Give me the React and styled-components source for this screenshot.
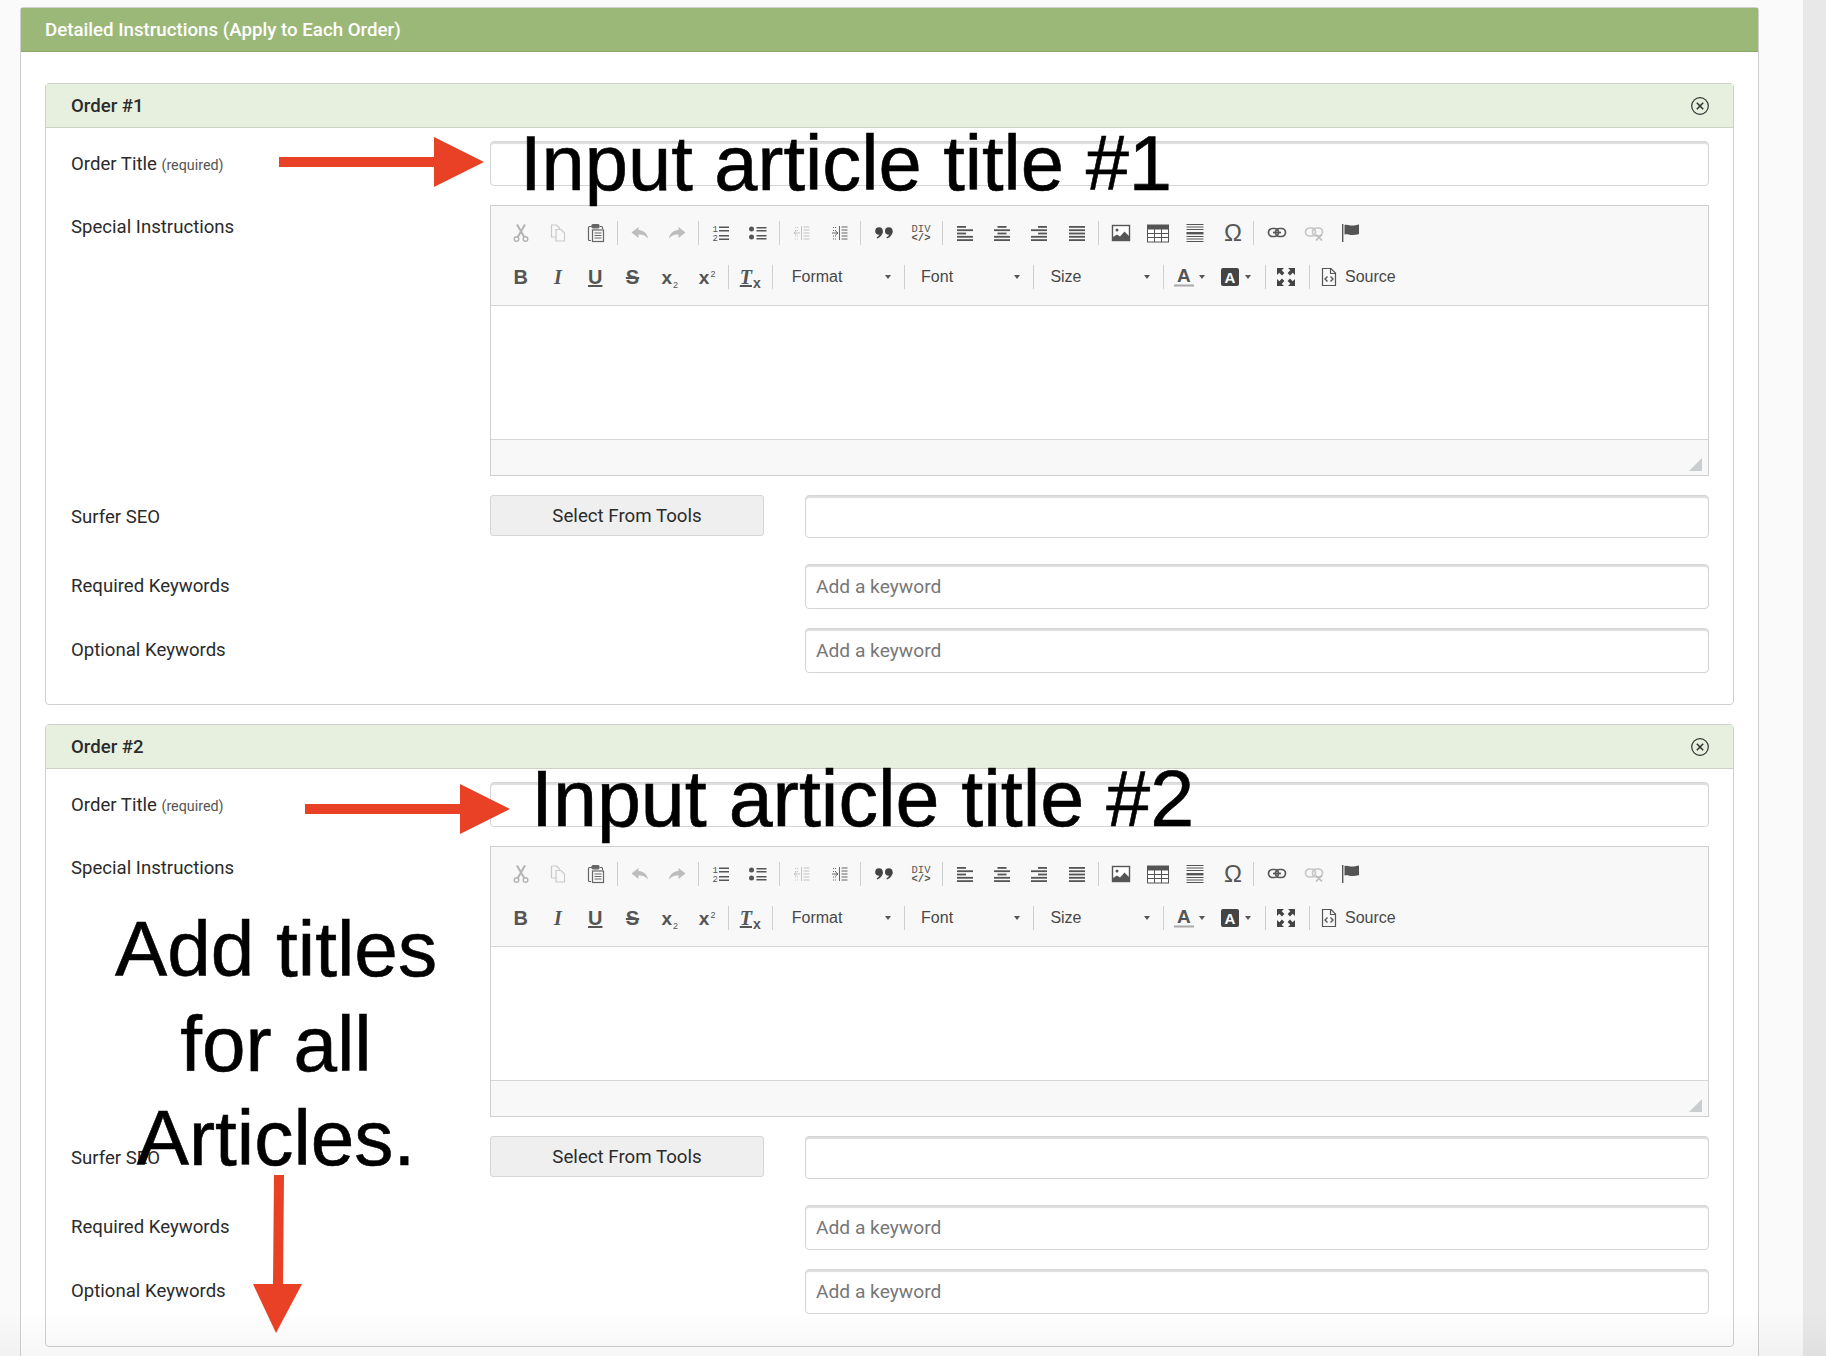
import React from 'react';
import styled, { createGlobalStyle } from 'styled-components';

const GlobalStyle = createGlobalStyle`
  html, body {
    margin: 0;
    padding: 0;
    background: #fafafa;
  }
  body {
    font-family: 'Roboto', sans-serif;
    overflow: hidden;
  }
  * {
    box-sizing: border-box;
  }
`;

const Page = styled.div`
  position: relative;
  display: flex;
  width: 1826px;
  height: 1356px;
  overflow: hidden;
`;

const Main = styled.main`
  flex: 1;
  display: flex;
  padding: 7px 44px 0 20px;
  background: #fafafa;
`;

const ScrollTrack = styled.div`
  width: 23px;
  background: #e8e8e8;
`;

const Panel = styled.section`
  flex: 1;
  background: #fff;
  border: 1px solid #cfcfcf;
  border-bottom: none;
  border-radius: 4px 4px 0 0;
`;

const PanelHeader = styled.h1`
  margin: 0;
  height: 44px;
  padding-left: 24px;
  display: flex;
  align-items: center;
  background: #9cb878;
  border-bottom: 1px solid #8ba669;
  color: #fff;
  font-size: 18.7px;
  font-weight: 500;
`;

const PanelBody = styled.div`
  display: flex;
  flex-direction: column;
  gap: 19px;
  padding: 31px 24px 0;
`;

const Card = styled.article`
  border: 1px solid #cfcfcf;
  border-radius: 4px;
  padding-bottom: ${(p) => p.$bottom}px;
`;

const CardHeader = styled.header`
  height: 44px;
  padding: 0 23px 0 25px;
  display: flex;
  align-items: center;
  justify-content: space-between;
  background: #e7f0df;
  border-bottom: 1px solid #ccd3c6;
  color: #2b2b2b;
  font-size: 18.6px;
  font-weight: 500;
`;

const Row = styled.div`
  display: grid;
  grid-template-columns: 419px 274px 1fr;
  align-items: ${(p) => (p.$start ? 'start' : 'center')};
  margin-top: ${(p) => p.$top}px;
  padding: 0 24px 0 25px;
`;

const Label = styled.label`
  color: #2b2b2b;
  font-size: 18.6px;
  margin-top: ${(p) => p.$nudge || 0}px;
`;

const Hint = styled.small`
  color: #555;
  font-size: 14.3px;
`;

const TextInput = styled.input`
  display: block;
  height: ${(p) => p.$height || 45}px;
  padding: 0 10px;
  grid-column: ${(p) => (p.$wide ? '2 / -1' : '3')};
  margin-left: ${(p) => (p.$wide ? 0 : 41)}px;
  width: ${(p) => (p.$wide ? '100%' : 'calc(100% - 41px)')};
  border: 1px solid #d2d6d9;
  border-radius: 4px;
  box-shadow: inset 0 2px 1px #dedede;
  background: #fff;
  font-family: 'Roboto', sans-serif;
  font-size: 19.2px;
  color: #333;

  &::placeholder {
    color: #777;
    opacity: 1;
  }
`;

const ToolsButton = styled.button`
  grid-column: 2;
  height: 41px;
  margin-bottom: 2px;
  border: 1px solid #d6d6d6;
  border-radius: 3px;
  background: #efefef;
  color: #2b2b2b;
  font-family: 'Roboto', sans-serif;
  font-size: 18.7px;
`;

const Editor = styled.div`
  grid-column: 2 / -1;
  border: 1px solid #cfcfcf;
  background: #f8f8f8;
`;

const Toolbar = styled.div`
  height: 100px;
  padding: 5px 0 0 10px;
  border-bottom: 1px solid #d6d6d6;
`;

const ToolRow = styled.div`
  display: flex;
  align-items: center;
  height: 44px;
  padding-left: ${(p) => p.$inset || 0}px;
`;

const ToolButton = styled.span`
  flex: none;
  width: ${(p) => p.$width || 37.3}px;
  height: 32px;
  display: flex;
  align-items: center;
  justify-content: ${(p) => (p.$pad ? 'flex-start' : 'center')};
  padding-left: ${(p) => p.$pad || 0}px;
`;

const Sep = styled.span`
  flex: none;
  width: 1px;
  height: 24px;
  margin: 0 ${(p) => p.$right ?? 3.5}px 0 ${(p) => p.$left ?? 2.2}px;
  background: #cfcfcf;
`;

const Combo = styled.span`
  flex: none;
  width: 129.3px;
  height: 24px;
  padding: 0 13px 0 16px;
  display: flex;
  align-items: center;
  justify-content: space-between;
  border-right: 1px solid #cfcfcf;
  color: #484848;
  font-family: 'Liberation Sans', Arial, sans-serif;
  font-size: 16px;
`;

const Caret = styled.i`
  width: 0;
  height: 0;
  margin-left: ${(p) => p.$gap || 0}px;
  border-left: 3.5px solid transparent;
  border-right: 3.5px solid transparent;
  border-top: 4px solid #555;
`;

const Glyph = styled.span`
  font-family: ${(p) => (p.$serif ? "'Liberation Serif', serif" : "'Liberation Sans', Arial, sans-serif")};
  font-size: ${(p) => p.$size || 20}px;
  font-weight: 700;
  font-style: ${(p) => (p.$italic ? 'italic' : 'normal')};
  text-decoration: ${(p) => p.$line || 'none'};
  color: #555;
  line-height: 1;
`;

const Tiny = styled.span`
  font-family: 'Liberation Sans', Arial, sans-serif;
  font-size: ${(p) => p.$size || 9}px;
  font-style: normal;
  font-weight: ${(p) => p.$weight || 400};
  text-decoration: none;
  display: inline-block;
  margin-left: 1px;
  vertical-align: ${(p) => (p.$up ? '7px' : '-4px')};
  line-height: 0;
`;

const SourceText = styled.span`
  margin-left: 6px;
  color: #484848;
  font-family: 'Liberation Sans', Arial, sans-serif;
  font-size: 16px;
`;

const EditArea = styled.div`
  height: 133px;
  background: #fff;
`;

const EditFooter = styled.div`
  position: relative;
  height: 36px;
  border-top: 1px solid #d6d6d6;
`;

const Grip = styled.i`
  position: absolute;
  right: 6px;
  bottom: 4px;
  width: 0;
  height: 0;
  border-left: 13px solid transparent;
  border-bottom: 13px solid #c8cdd0;
`;

const Note = styled.div`
  position: absolute;
  left: ${(p) => p.$left}px;
  top: ${(p) => p.$top}px;
  width: ${(p) => (p.$width ? `${p.$width}px` : 'auto')};
  color: #000;
  font-family: 'Liberation Sans', Arial, sans-serif;
  font-size: ${(p) => p.$size}px;
  line-height: ${(p) => p.$lead || 1.15};
  text-align: ${(p) => (p.$width ? 'center' : 'left')};
  white-space: nowrap;
  -webkit-text-stroke: 0.6px #000;
`;

const ArrowArt = styled.svg`
  position: absolute;
  left: 0;
  top: 0;
  pointer-events: none;
`;

const BottomFade = styled.div`
  position: absolute;
  left: 0;
  right: 0;
  bottom: 0;
  height: 46px;
  pointer-events: none;
  background: linear-gradient(to bottom, rgba(0, 0, 0, 0), rgba(0, 0, 0, 0.035));
`;

const Icon = ({ children, size = 20 }) => (
  <svg width={size} height={size} viewBox="0 0 20 20" fill="none" stroke="none" overflow="visible">{children}</svg>
);

const bars = (rows) => rows.map(([x, y, w, h = 1.8], i) => <rect key={i} x={x} y={y} width={w} height={h} fill="#555" />);

const icons = {
  cut: (
    <g stroke="#b4b4b4" strokeWidth="2">
      <circle cx="5.5" cy="16" r="2.3" strokeWidth="1.4" />
      <circle cx="14.5" cy="16" r="2.3" strokeWidth="1.4" />
      <path d="M6.8 14 14 1.5M13.2 14 6 1.5" />
    </g>
  ),
  copy: (
    <g stroke="#cacaca" strokeWidth="1.2">
      <path d="M9 14H3.500V2h5l3 3v1" />
      <path d="M8 6.500h5l3.500 3.500v8H8z" fill="#f8f8f8" />
    </g>
  ),
  paste: (
    <g stroke="#666" strokeWidth="1.2">
      <path d="M5 17.500H3.500a1 1 0 0 1-1-1V4.500a1 1 0 0 1 1-1H6M14 3.500h1.500a1 1 0 0 1 1 1V6" />
      <rect x="6" y="1.600" width="7" height="3.200" rx="1" fill="#666" />
      <rect x="6.500" y="7" width="11" height="11.500" />
      <path d="M8.500 10h7M8.500 12.500h7M8.500 15h7" />
    </g>
  ),
  undo: <path d="M8.500 4 1.500 9.500 8.500 15v-3.500c3.600-.4 6.800.8 9.500 4-.4-4.700-4.500-8.200-9.500-8.400z" fill="#bdbdbd" />,
  redo: <path d="M11.500 4 18.500 9.500 11.500 15v-3.500c-3.600-.4-6.800.8-9.500 4 .4-4.700 4.500-8.200 9.500-8.400z" fill="#bdbdbd" />,
  ol: (
    <g>
      <text x="1.500" y="9" fontFamily="Liberation Mono" fontSize="9" fill="#555">1</text>
      <text x="1.500" y="18" fontFamily="Liberation Mono" fontSize="9" fill="#555">2</text>
      {bars([[8, 3.500, 10, 1.5], [8, 7, 10, 1.5], [8, 12, 10, 1.5], [8, 15.500, 10, 1.5]])}
    </g>
  ),
  ul: (
    <g>
      <circle cx="3.500" cy="6" r="2.500" fill="#555" />
      <circle cx="3.500" cy="14" r="2.500" fill="#555" />
      {bars([[8.500, 4, 10, 1.5], [8.500, 7, 10, 1.5], [8.500, 12, 10, 1.5], [8.500, 15, 10, 1.5]])}
    </g>
  ),
  outdent: (
    <g stroke="#c4c4c4" strokeWidth="1">
      <path d="M9.500 3v14M11.500 4h6M11.500 7h6M11.500 10h6M11.500 13h6M11.500 16h6" />
      <path d="M3 4.500h3M3 7.500h3M3 13h3M3 16h3" strokeDasharray="1 1" />
      <path d="M2 10h6M4.500 8 2 10l2.500 2" />
    </g>
  ),
  indent: (
    <g stroke="#666" strokeWidth="1">
      <path d="M9.500 3v14M11.500 4h6M11.500 7h6M11.500 10h6M11.500 13h6M11.500 16h6" />
      <path d="M3 4.500h3M3 7.500h3M3 13h3M3 16h3" strokeDasharray="1 1" />
      <path d="M2 10h6M5.500 8 8 10l-2.500 2" />
    </g>
  ),
  quote: (
    <g fill="#444">
      <circle cx="5" cy="8" r="3.800" />
      <path d="M8.800 8c0 3.600-2 6.200-5.600 7.500l-.6-1.200c2-1 3-2.400 3.200-4.500z" />
      <circle cx="14.800" cy="8" r="3.800" />
      <path d="M18.600 8c0 3.600-2 6.200-5.600 7.500l-.6-1.200c2-1 3-2.400 3.200-4.500z" />
    </g>
  ),
  div: (
    <g fill="#555" textAnchor="middle">
      <text x="10" y="9" fontFamily="Liberation Mono" fontSize="10.500">DIV</text>
      <text x="10" y="17.500" fontFamily="Liberation Mono" fontSize="10.500" fontWeight="700">&lt;/&gt;</text>
    </g>
  ),
  left: bars([[2, 3, 9], [2, 6.300, 16], [2, 9.600, 9], [2, 12.900, 16], [2, 16.200, 16]]),
  center: bars([[5.500, 3, 9], [2, 6.300, 16], [5.500, 9.600, 9], [2, 12.900, 16], [2, 16.200, 16]]),
  right: bars([[9, 3, 9], [2, 6.300, 16], [9, 9.600, 9], [2, 12.900, 16], [2, 16.200, 16]]),
  justify: bars([[2, 3, 16], [2, 6.300, 16], [2, 9.600, 16], [2, 12.900, 16], [2, 16.200, 16]]),
  image: (
    <g>
      <rect x="1.500" y="2.500" width="17" height="15" stroke="#555" strokeWidth="1.4" fill="#fff" />
      <circle cx="6" cy="7" r="1.500" fill="#555" />
      <path d="M2 17v-3l4-2.500 3 2 4.500-5 5 5V17z" fill="#555" />
    </g>
  ),
  table: (
    <g>
      <rect x="-0.500" y="2" width="21" height="17" fill="#fff" stroke="#555" />
      <rect x="-0.500" y="2" width="21" height="4.500" fill="#555" />
      <path d="M6.500 6v13M13.500 6v13M0 10.500h20M0 14.500h20" stroke="#555" strokeWidth="1" />
    </g>
  ),
  hr: (
    <g>
      {bars([[1.500, 1, 17, 1], [1.500, 3.500, 17, 1], [1.500, 6, 17, 1], [1.500, 9, 17, 2.400], [1.500, 13, 17, 1], [1.500, 15.500, 17, 1], [1.500, 18, 17, 1]])}
    </g>
  ),
  omega: <text x="10" y="18" textAnchor="middle" fontFamily="Liberation Sans" fontSize="24" fill="#555">Ω</text>,
  link: (
    <g stroke="#555" strokeWidth="1.700">
      <rect x="1.500" y="5.500" width="10" height="8" rx="4" />
      <rect x="8.500" y="5.500" width="10" height="8" rx="4" />
      <path d="M6 9.500h8" />
    </g>
  ),
  unlink: (
    <g stroke="#c6c6c6" strokeWidth="1.700">
      <rect x="1.500" y="5" width="10" height="8" rx="4" />
      <rect x="8.500" y="5" width="10" height="8" rx="4" />
      <path d="M12 11.500l6 6M18 11.500l-6 6" stroke="#bdbdbd" />
    </g>
  ),
  flag: (
    <g fill="#555">
      <rect x="1" y="1" width="1.400" height="18" />
      <path d="M3.500 2c3-1 5 .6 7.500.6 2 0 5-.6 7-1V11c-2 .7-5 1-7 1-2.700 0-4.500-1.400-7.500-.4z" />
    </g>
  ),
  maximize: (
    <g fill="#444">
      <path d="M1 1h7L5.700 3.300 8.400 6 6 8.400 3.300 5.700 1 8z" />
      <path d="M19 1v7l-2.300-2.300L14 8.400 11.600 6l2.700-2.700L12 1z" />
      <path d="M1 19v-7l2.300 2.300L6 11.600 8.400 14l-2.700 2.700L8 19z" />
      <path d="M19 19h-7l2.300-2.300L11.600 14 14 11.600l2.700 2.700L19 12z" />
    </g>
  ),
  source: (
    <g stroke="#555" strokeWidth="1.200">
      <path d="M3.500 1.500h8.500l4.500 4.500v12.500h-13z" />
      <path d="M11.500 1.500v5h5" />
      <path d="M8.500 9.500 6 12l2.500 2.500M11.500 9.500 14 12l-2.500 2.500" strokeWidth="1.400" />
    </g>
  ),
};

const firstRow = [
  ['cut', 'copy', 'paste'],
  ['undo', 'redo'],
  ['ol', 'ul'],
  ['outdent', 'indent'],
  ['quote', 'div'],
  ['left', 'center', 'right', 'justify'],
  ['image', 'table', 'hr', 'omega'],
  ['link', 'unlink', 'flag'],
];

const EditorToolbar = () => (
  <Toolbar>
    <ToolRow $inset={1.5}>
      {firstRow.map((group, i) => (
        <React.Fragment key={i}>
          {i > 0 && <Sep />}
          {group.map((name) => (
            <ToolButton key={name}><Icon>{icons[name]}</Icon></ToolButton>
          ))}
        </React.Fragment>
      ))}
    </ToolRow>
    <ToolRow $inset={1}>
      <ToolButton><Glyph>B</Glyph></ToolButton>
      <ToolButton><Glyph $serif $italic>I</Glyph></ToolButton>
      <ToolButton><Glyph $line="underline">U</Glyph></ToolButton>
      <ToolButton><Glyph $line="line-through">S</Glyph></ToolButton>
      <ToolButton><Glyph $size={19}>x<Tiny>2</Tiny></Glyph></ToolButton>
      <ToolButton><Glyph $size={19}>x<Tiny $up>2</Tiny></Glyph></ToolButton>
      <Sep $left={2} $right={1} />
      <ToolButton $width={41}><Glyph $serif $italic $line="underline">T<Tiny $size={14} $weight={700}>x</Tiny></Glyph></ToolButton>
      <Sep $left={1} $right={3} />
      <Combo>Format<Caret /></Combo>
      <Combo>Font<Caret /></Combo>
      <Combo>Size<Caret /></Combo>
      <ToolButton $width={48}>
        <svg width="26" height="22" viewBox="0 0 26 22">
          <text x="7" y="16" fontFamily="Liberation Sans" fontWeight="700" fontSize="19" fill="#555">A</text>
          <rect x="4" y="18.500" width="20" height="2" fill="#aaa" />
        </svg>
        <Caret $gap={3} />
      </ToolButton>
      <ToolButton $width={48}>
        <svg width="20" height="20" viewBox="0 0 20 20">
          <rect x="1" y="1" width="18" height="18" rx="2" fill="#444" />
          <text x="10" y="16" textAnchor="middle" fontFamily="Liberation Sans" fontWeight="700" fontSize="15" fill="#fff">A</text>
        </svg>
        <Caret $gap={5} />
      </ToolButton>
      <Sep $left={5} $right={2} />
      <ToolButton><Icon>{icons.maximize}</Icon></ToolButton>
      <Sep $left={4} $right={1} />
      <ToolButton $width={120} $pad={8}>
        <Icon>{icons.source}</Icon>
        <SourceText>Source</SourceText>
      </ToolButton>
    </ToolRow>
  </Toolbar>
);

const CloseIcon = () => (
  <svg width="20" height="20" viewBox="0 0 20 20" fill="none" stroke="#333">
    <circle cx="10" cy="10" r="8.300" strokeWidth="1.200" />
    <path d="M6.800 6.800l6.400 6.400M13.200 6.800l-6.400 6.400" strokeWidth="1.600" />
  </svg>
);

const OrderCard = ({ number, bottom }) => (
  <Card $bottom={bottom}>
    <CardHeader>
      <span>Order #{number}</span>
      <CloseIcon />
    </CardHeader>
    <Row $top={13}>
      <Label>Order Title <Hint>(required)</Hint></Label>
      <TextInput $wide />
    </Row>
    <Row $top={19} $start>
      <Label $nudge={11}>Special Instructions</Label>
      <Editor>
        <EditorToolbar />
        <EditArea />
        <EditFooter><Grip /></EditFooter>
      </Editor>
    </Row>
    <Row $top={19}>
      <Label>Surfer SEO</Label>
      <ToolsButton>Select From Tools</ToolsButton>
      <TextInput $height={43} />
    </Row>
    <Row $top={26}>
      <Label $nudge={-2}>Required Keywords</Label>
      <TextInput placeholder="Add a keyword" />
    </Row>
    <Row $top={19}>
      <Label $nudge={-2}>Optional Keywords</Label>
      <TextInput placeholder="Add a keyword" />
    </Row>
  </Card>
);

const App = () => (
  <Page>
    <GlobalStyle />
    <Main>
      <Panel>
        <PanelHeader>Detailed Instructions (Apply to Each Order)</PanelHeader>
        <PanelBody>
          <OrderCard number={1} bottom={31} />
          <OrderCard number={2} bottom={32} />
        </PanelBody>
      </Panel>
    </Main>
    <ScrollTrack />
    <BottomFade />
    <ArrowArt width="1826" height="1356" viewBox="0 0 1826 1356" fill="#e94125">
      <path d="M279 157h155v-20l50 25-50 25v-20H279z" />
      <path d="M305 804h155v-20l50 25-50 25v-20H305z" />
      <path d="M274 1175h10l-1 109h19l-26 49-23-49h20z" />
    </ArrowArt>
    <Note $left={520} $top={119} $size={77.7}>Input article title #1</Note>
    <Note $left={531} $top={754} $size={79}>Input article title #2</Note>
    <Note $left={66} $top={902} $width={420} $size={78.3} $lead={1.21}>
      Add titles<br />for all<br />Articles.
    </Note>
  </Page>
);

export default App;
